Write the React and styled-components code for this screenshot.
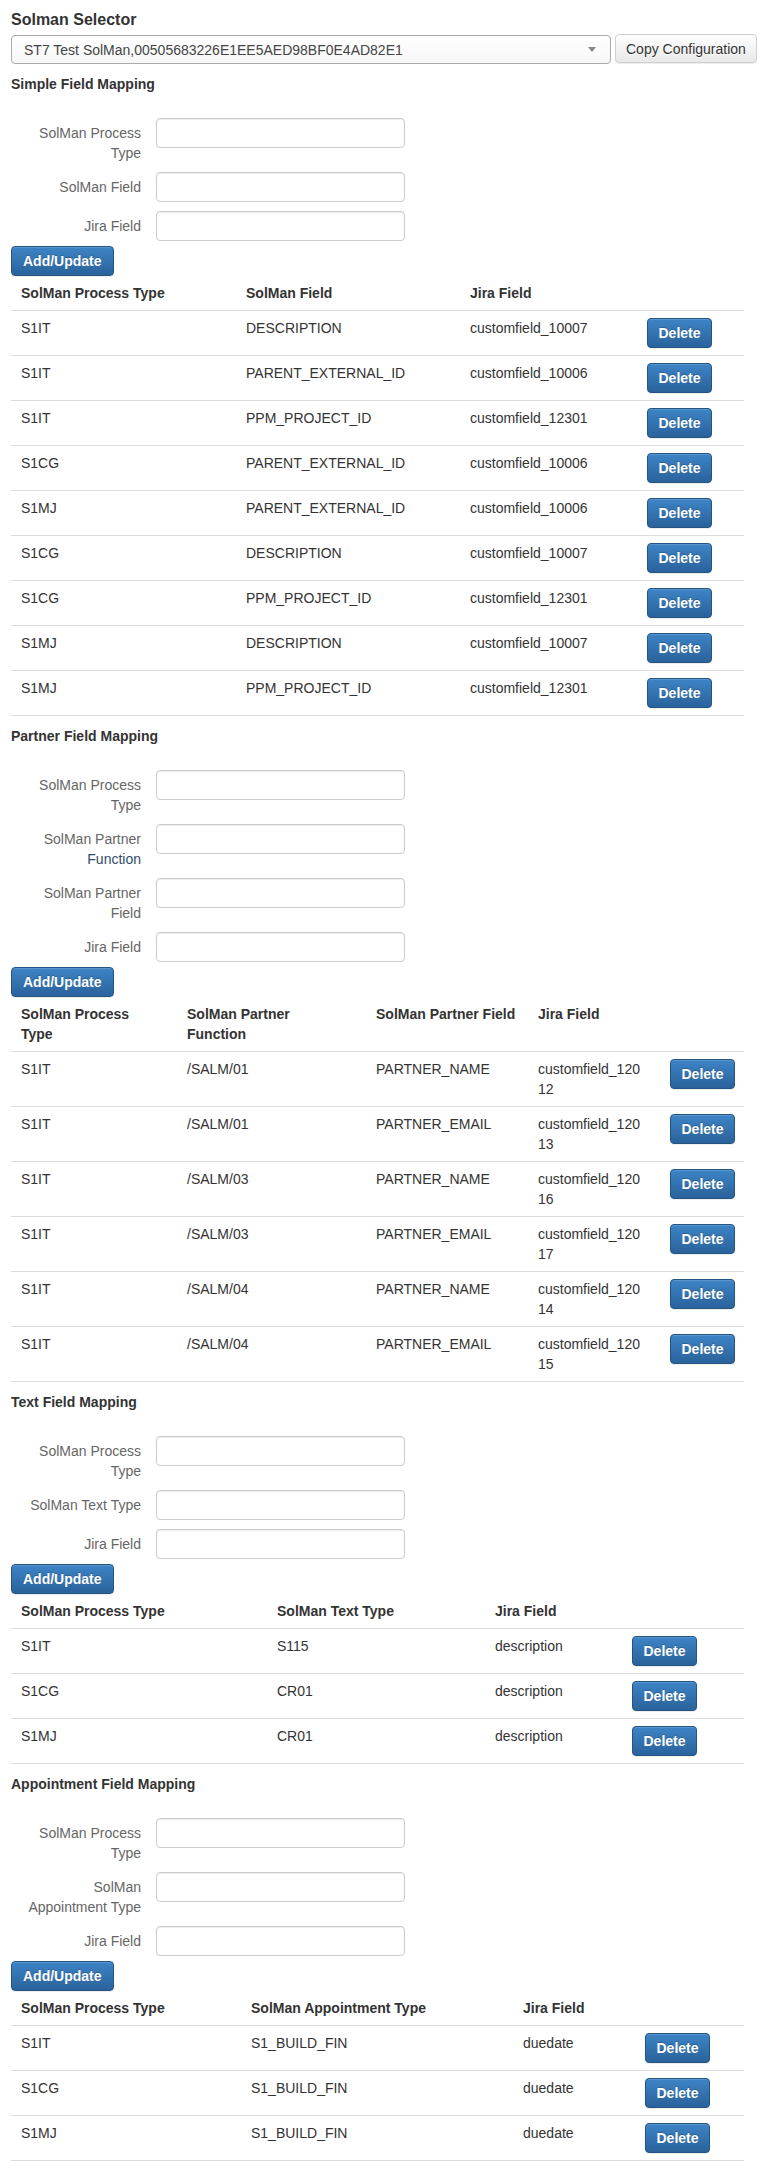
import React from "react";
import styled, { createGlobalStyle } from "styled-components";

const GlobalStyle = createGlobalStyle`
  html, body {
    margin: 0;
    padding: 0;
    background: #fff;
  }
  body {
    font-family: "Liberation Sans", Arial, Helvetica, sans-serif;
    font-size: 14px;
    line-height: 20px;
    color: #333;
  }
`;

const simpleRows = [
  ["S1IT", "DESCRIPTION", "customfield_10007"],
  ["S1IT", "PARENT_EXTERNAL_ID", "customfield_10006"],
  ["S1IT", "PPM_PROJECT_ID", "customfield_12301"],
  ["S1CG", "PARENT_EXTERNAL_ID", "customfield_10006"],
  ["S1MJ", "PARENT_EXTERNAL_ID", "customfield_10006"],
  ["S1CG", "DESCRIPTION", "customfield_10007"],
  ["S1CG", "PPM_PROJECT_ID", "customfield_12301"],
  ["S1MJ", "DESCRIPTION", "customfield_10007"],
  ["S1MJ", "PPM_PROJECT_ID", "customfield_12301"],
];

const partnerRows = [
  ["S1IT", "/SALM/01", "PARTNER_NAME", "customfield_12012"],
  ["S1IT", "/SALM/01", "PARTNER_EMAIL", "customfield_12013"],
  ["S1IT", "/SALM/03", "PARTNER_NAME", "customfield_12016"],
  ["S1IT", "/SALM/03", "PARTNER_EMAIL", "customfield_12017"],
  ["S1IT", "/SALM/04", "PARTNER_NAME", "customfield_12014"],
  ["S1IT", "/SALM/04", "PARTNER_EMAIL", "customfield_12015"],
];

const textRows = [
  ["S1IT", "S115", "description"],
  ["S1CG", "CR01", "description"],
  ["S1MJ", "CR01", "description"],
];

const appointmentRows = [
  ["S1IT", "S1_BUILD_FIN", "duedate"],
  ["S1CG", "S1_BUILD_FIN", "duedate"],
  ["S1MJ", "S1_BUILD_FIN", "duedate"],
];

// accent: trailing word of a label drawn in the darker hover colour
const sections = [
  {
    title: "Simple Field Mapping",
    fields: [{ text: "SolMan Process Type" }, { text: "SolMan Field" }, { text: "Jira Field" }],
    columns: [
      { label: "SolMan Process Type", width: 225 },
      { label: "SolMan Field", width: 224 },
      { label: "Jira Field", width: 177 },
    ],
    actionWidth: 107,
    rows: simpleRows,
  },
  {
    title: "Partner Field Mapping",
    fields: [
      { text: "SolMan Process Type" },
      { text: "SolMan Partner", accent: "Function" },
      { text: "SolMan Partner Field" },
      { text: "Jira Field" },
    ],
    columns: [
      { label: "SolMan Process\nType", width: 166 },
      { label: "SolMan Partner\nFunction", width: 189 },
      { label: "SolMan Partner Field", width: 162 },
      { label: "Jira Field", width: 132, wrap: 104 },
    ],
    actionWidth: 84,
    rows: partnerRows,
  },
  {
    title: "Text Field Mapping",
    fields: [{ text: "SolMan Process Type" }, { text: "SolMan Text Type" }, { text: "Jira Field" }],
    columns: [
      { label: "SolMan Process Type", width: 256 },
      { label: "SolMan Text Type", width: 218 },
      { label: "Jira Field", width: 137 },
    ],
    actionWidth: 122,
    rows: textRows,
  },
  {
    title: "Appointment Field Mapping",
    fields: [
      { text: "SolMan Process Type" },
      { text: "SolMan Appointment Type" },
      { text: "Jira Field" },
    ],
    columns: [
      { label: "SolMan Process Type", width: 230 },
      { label: "SolMan Appointment Type", width: 272 },
      { label: "Jira Field", width: 122 },
    ],
    actionWidth: 109,
    rows: appointmentRows,
  },
];

const App = () => {
  return (
    <Page>
      <GlobalStyle />
      <PageTitle>Solman Selector</PageTitle>
      <SelectorBar>
        <Select>
          <span>ST7 Test SolMan,00505683226E1EE5AED98BF0E4AD82E1</span>
          <Caret />
        </Select>
        <DefaultButton>Copy Configuration</DefaultButton>
      </SelectorBar>

      {sections.map((section) => (
        <MappingSection key={section.title} {...section} />
      ))}
    </Page>
  );
};

const MappingSection = ({ title, fields, columns, actionWidth, rows }) => (
  <section>
    <SectionTitle>{title}</SectionTitle>
    <Form>
      {fields.map((field, i) => (
        <FormRow key={i}>
          <FieldLabel>
            {field.text}
            {field.accent && <Accent> {field.accent}</Accent>}
          </FieldLabel>
          <TextInput type="text" />
        </FormRow>
      ))}
    </Form>
    <PrimaryButton>Add/Update</PrimaryButton>
    <Table>
      <colgroup>
        {columns.map((col) => (
          <col key={col.label} style={{ width: col.width }} />
        ))}
        <col style={{ width: actionWidth }} />
      </colgroup>
      <thead>
        <tr>
          {columns.map((col) => (
            <HeadCell key={col.label}>{col.label}</HeadCell>
          ))}
          <HeadCell />
        </tr>
      </thead>
      <tbody>
        {rows.map((row, r) => (
          <tr key={r}>
            {row.map((value, c) => (
              <Cell key={c}>
                {columns[c].wrap ? <Wrap $max={columns[c].wrap}>{value}</Wrap> : value}
              </Cell>
            ))}
            <Cell>
              <DeleteButton>Delete</DeleteButton>
            </Cell>
          </tr>
        ))}
      </tbody>
    </Table>
  </section>
);

const Page = styled.main`
  padding: 10px 0 0 11px;
  width: 763px;
  box-sizing: border-box;
`;

const PageTitle = styled.h4`
  margin: 0 0 4px;
  font-size: 16px;
  line-height: 20px;
  font-weight: 700;
  color: #333;
`;

const SelectorBar = styled.div`
  display: flex;
  align-items: flex-start;
  gap: 4px;
`;

const Select = styled.div`
  flex: 0 0 600px;
  height: 29px;
  box-sizing: border-box;
  display: flex;
  align-items: center;
  justify-content: space-between;
  padding: 0 14px 0 12px;
  border: 1px solid #aaa;
  border-radius: 4px;
  background: linear-gradient(to bottom, #ffffff 0%, #f7f7f7 100%);
  color: #444;
  font-size: 14px;
  margin-top: 1px;
`;

const Caret = styled.span`
  width: 0;
  height: 0;
  border-left: 4px solid transparent;
  border-right: 4px solid transparent;
  border-top: 5px solid #888;
`;

const BaseButton = styled.button`
  font-family: inherit;
  font-size: 14px;
  line-height: 18px;
  box-sizing: border-box;
  border-radius: 4px;
  cursor: pointer;
  white-space: nowrap;
`;

const DefaultButton = styled(BaseButton)`
  flex: 0 0 auto;
  height: 29px;
  padding: 4px 10px;
  color: #333;
  border: 1px solid #d0d0d0;
  background: linear-gradient(to bottom, #ffffff 0%, #e8e8e8 100%);
  box-shadow: inset 0 1px 0 rgba(255, 255, 255, 0.15),
    0 1px 1px rgba(0, 0, 0, 0.075);
  text-shadow: 0 1px 0 #fff;
`;

const PrimaryButton = styled(BaseButton)`
  display: block;
  height: 30px;
  padding: 5px 11px;
  margin-top: 5px;
  font-weight: 700;
  color: #fff;
  border: 1px solid #245580;
  background: linear-gradient(to bottom, #3d84c6 0%, #2a629b 100%);
  text-shadow: 0 -1px 0 rgba(0, 0, 0, 0.2);
  box-shadow: inset 0 1px 0 rgba(255, 255, 255, 0.15),
    0 1px 1px rgba(0, 0, 0, 0.075);
`;

const DeleteButton = styled(PrimaryButton)`
  width: 65px;
  padding: 5px 0;
  margin-top: 0;
  text-align: center;
`;

const SectionTitle = styled.h5`
  margin: 10px 0 24px;
  font-size: 14px;
  line-height: 20px;
  font-weight: 700;
  color: #333;
`;

const Form = styled.div`
  display: flex;
  flex-direction: column;
  gap: 9px;
`;

const FormRow = styled.div`
  display: grid;
  grid-template-columns: 130px 249px;
  column-gap: 15px;
  align-items: start;
`;

const FieldLabel = styled.label`
  padding: 5px 0 0 6px;
  text-align: right;
  color: #666;
  font-size: 14px;
  line-height: 20px;
`;

const Accent = styled.span`
  color: #2f4c6b;
`;

const TextInput = styled.input`
  height: 30px;
  box-sizing: border-box;
  width: 249px;
  padding: 4px 10px;
  border: 1px solid #ccc;
  border-radius: 4px;
  box-shadow: inset 0 1px 1px rgba(0, 0, 0, 0.075);
  font-family: inherit;
  font-size: 14px;
  background: #fff;
`;

const Table = styled.table`
  width: 733px;
  table-layout: fixed;
  border-collapse: collapse;
  border-spacing: 0;
`;

const HeadCell = styled.th`
  padding: 7px 10px;
  text-align: left;
  vertical-align: top;
  font-weight: 700;
  font-size: 14px;
  line-height: 20px;
  color: #333;
  white-space: pre-line;
  border-bottom: 1px solid #ddd;
`;

const Cell = styled.td`
  padding: 7px 10px;
  vertical-align: top;
  font-size: 14px;
  line-height: 20px;
  color: #333;
  border-bottom: 1px solid #ddd;
`;

const Wrap = styled.span`
  display: block;
  max-width: ${(p) => p.$max}px;
  word-break: break-all;
`;

export default App;
